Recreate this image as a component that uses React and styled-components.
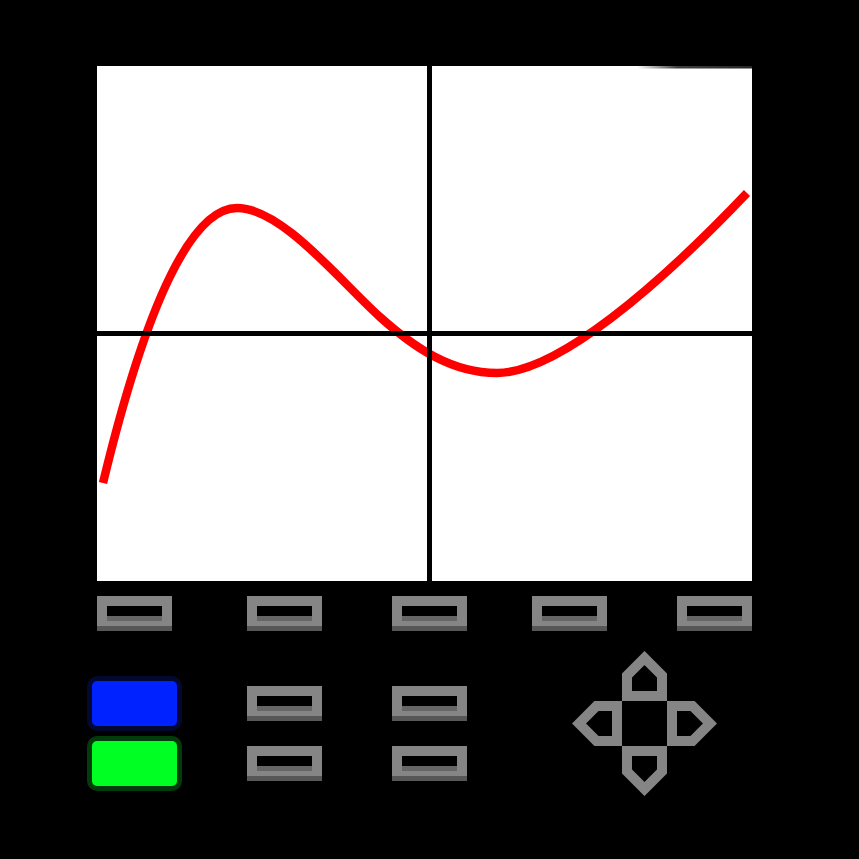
import React from 'react'
import styled, { createGlobalStyle } from 'styled-components'

const GlobalStyle = createGlobalStyle`
  html, body {
    margin: 0;
    padding: 0;
    background: #000;
  }
  body {
    font-family: "Liberation Sans", Arial, sans-serif;
  }
`

const Device = styled.div`
  width: 859px;
  height: 859px;
  box-sizing: border-box;
  padding: 66px 0 0 97px;
  background: #000;
  overflow: hidden;
`

const Screen = styled.div`
  position: relative;
  width: 655px;
  height: 515px;
  background: #fff;
`

const Plot = styled.svg`
  display: block;
  width: 655px;
  height: 515px;
`

const TopKeys = styled.div`
  display: grid;
  grid-template-columns: 150px 145px 140px 145px 75px;
  margin-top: 15px;
`

const LowerRow = styled.div`
  display: grid;
  grid-template-columns: 155px 145px 180px 145px;
  align-items: start;
  margin-top: 20px;
  margin-left: -5px;
`

const KeyColumn = styled.div`
  display: flex;
  flex-direction: column;
  gap: 25px;
  margin-top: ${p => p.$offset || 0}px;
`

const ColorKeys = styled.div`
  display: flex;
  flex-direction: column;
  gap: 15px;
  margin-top: 30px;
`

const ColorKey = styled.div`
  width: 85px;
  height: 45px;
  border-radius: 5px;
  background: ${p => p.$color};
  box-shadow: 0 0 0 5px ${p => p.$halo};
`

const Key = styled.div`
  width: 75px;
  height: 35px;
  box-sizing: border-box;
  padding: 10px 10px 5px;
  background: #858585;
  border-bottom: 5px solid #575757;
`

const Hole = styled.div`
  height: 10px;
  background: #000;
  border-bottom: 5px solid #666;
`

const Pad = styled.svg`
  display: block;
  width: 145px;
  height: 145px;
`

// red trace: rise to the peak, fall through the inflection, dip, then climb out
const trace = [
  'M6,417',
  'C50,235 95,142 140,142',
  'C185,142 243,215 283,251',
  'C318,282.5 355,307 400,307',
  'C460,307 560,221.5 650,127',
].join(' ')

function Graph() {
  return (
    <Plot viewBox="0 0 655 515">
      <defs>
        <linearGradient id="smudge" x1="0" x2="1" y1="0" y2="0">
          <stop offset="0" stopColor="#000" stopOpacity="0" />
          <stop offset="0.35" stopColor="#000" stopOpacity="0.75" />
          <stop offset="1" stopColor="#000" stopOpacity="0.85" />
        </linearGradient>
      </defs>
      <path d={trace} fill="none" stroke="#ff0000" strokeWidth="8.5" strokeLinecap="butt" />
      <rect x="330" y="0" width="5" height="515" fill="#000" />
      <rect x="0" y="265" width="655" height="5" fill="#000" />
      <rect x="540" y="0" width="115" height="2.5" fill="url(#smudge)" />
    </Plot>
  )
}

function DPad() {
  const arm = '-17.5,-27.5 -17.5,-48 0,-65.5 17.5,-48 17.5,-27.5'
  return (
    <Pad viewBox="-72.5 -72.5 145 145">
      {[0, 90, 180, 270].map(r => (
        <polygon
          key={r}
          points={arm}
          transform={`rotate(${r})`}
          fill="none"
          stroke="#858585"
          strokeWidth="10"
          strokeLinejoin="miter"
        />
      ))}
    </Pad>
  )
}

function CalcKey() {
  return (
    <Key>
      <Hole />
    </Key>
  )
}

export default function App() {
  return (
    <>
      <GlobalStyle />
      <Device>
        <Screen>
          <Graph />
        </Screen>
        <TopKeys>
          <CalcKey />
          <CalcKey />
          <CalcKey />
          <CalcKey />
          <CalcKey />
        </TopKeys>
        <LowerRow>
          <ColorKeys>
            <ColorKey $color="#0022ff" $halo="#020830" />
            <ColorKey $color="#00ff22" $halo="#013c0a" />
          </ColorKeys>
          <KeyColumn $offset={35}>
            <CalcKey />
            <CalcKey />
          </KeyColumn>
          <KeyColumn $offset={35}>
            <CalcKey />
            <CalcKey />
          </KeyColumn>
          <DPad />
        </LowerRow>
      </Device>
    </>
  )
}
